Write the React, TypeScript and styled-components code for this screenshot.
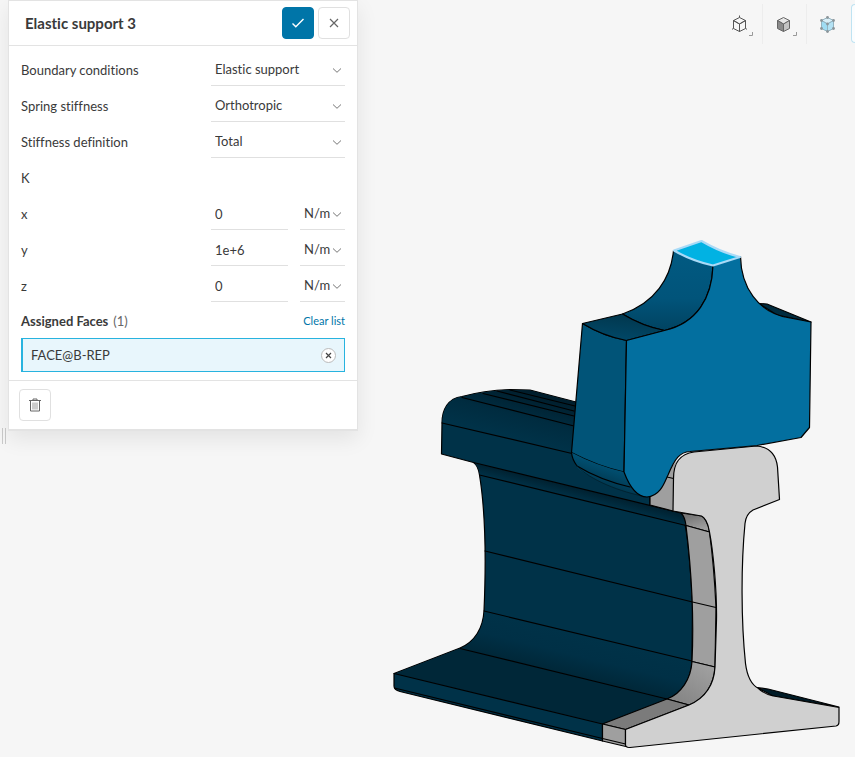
import React, { useState } from "react";
import styled, { createGlobalStyle, css } from "styled-components";

const GlobalStyle = createGlobalStyle`
  *, *::before, *::after { box-sizing: border-box; }
  body {
    margin: 0;
    background: #f6f6f6;
    color: #3a3a3a;
    font-family: Lato, "Liberation Sans", sans-serif;
    font-size: 13px;
    line-height: 20px;
    font-variant-ligatures: none;
  }
  button, input, select { font: inherit; color: inherit; }
`;

const Page = styled.div`
  display: flex;
  align-items: stretch;
  min-height: 100vh;
  overflow: hidden;
`;

const Gutter = styled.div`
  flex: 0 0 8px;
  padding: 428px 2px 0;
`;

const ResizeHandle = styled.div`
  width: 4px;
  height: 16px;
  border: solid #cacaca;
  border-width: 0 1px;
`;

const Panel = styled.form`
  flex: 0 0 350px;
  align-self: flex-start;
  background: #fff;
  border: 1px solid #e3e3e3;
  border-bottom-width: 2px;
  box-shadow: 0 8px 20px rgba(0, 0, 0, 0.08);
`;

const PanelHeader = styled.header`
  display: flex;
  align-items: center;
  gap: 4px;
  height: 45px;
  padding: 0 7px 0 16px;
  border-bottom: 1px solid #e3e3e3;
`;

const Title = styled.h1`
  flex: 1;
  margin: 0;
  font-size: 15px;
  font-weight: 700;
`;

const IconButton = styled.button<{ $primary?: boolean }>`
  display: grid;
  place-items: center;
  width: 32px;
  height: 32px;
  padding: 0;
  border: 1px solid #e0e0e0;
  border-radius: 4px;
  background: #fff;
  color: #666;
  ${(p) =>
    p.$primary &&
    css`
      border-color: #0075a8;
      background: #0075a8;
      color: #fff;
    `}
`;

const Fields = styled.div`
  padding: 4px 12px 8px;
`;

const Row = styled.div`
  display: flex;
  align-items: stretch;
  height: 36px;
`;

const Label = styled.label`
  flex: 1;
  padding-top: 10px;
`;

const Controls = styled.div`
  display: flex;
  justify-content: space-between;
  flex: 0 0 134px;
`;

const SelectBox = styled.div<{ $compact?: boolean }>`
  display: grid;
  grid-template-columns: 1fr 14px;
  align-items: center;
  width: ${(p) => (p.$compact ? "45px" : "100%")};
  border-bottom: 1px solid #e0e0e0;

  select {
    grid-area: 1 / 1 / 2 / 3;
    width: 100%;
    height: 35px;
    padding: 2px 0 0 4px;
    border: 0;
    background: transparent;
    appearance: none;
  }

  svg {
    grid-area: 1 / 2;
    margin-top: 4px;
    pointer-events: none;
    color: #777;
  }
`;

const NumberInput = styled.input`
  width: 77px;
  padding: 4px 4px 0;
  border: 0;
  border-bottom: 1px solid #e0e0e0;
  background: transparent;
`;

const ListHeader = styled.div`
  display: flex;
  align-items: center;
  gap: 5px;
  height: 36px;
  padding-top: 2px;
`;

const ListTitle = styled.h2`
  margin: 0;
  font-size: 13px;
  font-weight: 700;
`;

const Count = styled.span`
  flex: 1;
  color: #666;
`;

const ClearLink = styled.a`
  color: #0075a8;
  font-size: 11px;
  text-decoration: none;
`;

const FaceList = styled.ul`
  margin: 0;
  padding: 0;
  list-style: none;
`;

const FaceItem = styled.li`
  display: flex;
  align-items: center;
  justify-content: space-between;
  height: 34px;
  padding: 0 8px;
  border: 1px solid #27b3df;
  border-left-width: 2px;
  background: #e8f6fc;
`;

const RemoveButton = styled.button`
  display: grid;
  place-items: center;
  width: 15px;
  height: 15px;
  padding: 0;
  border: 1px solid #bbb;
  border-radius: 50%;
  background: #fff;
  color: #444;
`;

const PanelFooter = styled.footer`
  padding: 8px 10px;
  border-top: 1px solid #e3e3e3;
`;

const Viewport = styled.main`
  display: flex;
  flex: 1;
  flex-direction: column;
  min-width: 0;
`;

const Toolbar = styled.div`
  display: flex;
  justify-content: flex-end;
  padding-top: 4px;
`;

const Tool = styled.button`
  display: flex;
  align-items: center;
  width: 44px;
  height: 40px;
  padding: 0 0 0 8px;
  border: 0;
  border-right: 1px solid #ededed;
  background: transparent;

  &:nth-child(3) { border-right: 0; }
`;

const ClippedTool = styled.button`
  width: 4px;
  height: 39px;
  padding: 0;
  border: 1px solid #bfe3f2;
  border-right: 0;
  border-radius: 4px 0 0 4px;
  background: #fbfdfe;
`;

const Model = styled.svg`
  align-self: flex-end;
  width: 454px;
  max-width: 100%;
  height: auto;
  margin: auto 11px 5px 0;
`;

const Chevron = () => (
  <svg width="12" height="12" viewBox="0 0 12 12" fill="none" stroke="currentColor" aria-hidden="true">
    <path d="M2 4.500 6 8.300l4-3.800" />
  </svg>
);

type SelectProps = { id?: string; label?: string; options: string[]; compact?: boolean };

function Select({ id, label, options, compact }: SelectProps) {
  return (
    <SelectBox $compact={compact}>
      <select id={id} aria-label={label}>
        {options.map((o) => (
          <option key={o}>{o}</option>
        ))}
      </select>
      <Chevron />
    </SelectBox>
  );
}

const choices = [
  { id: "boundary", label: "Boundary conditions", options: ["Elastic support", "Fixed support"] },
  { id: "spring", label: "Spring stiffness", options: ["Orthotropic", "Isotropic"] },
  { id: "definition", label: "Stiffness definition", options: ["Total", "Distributed"] },
];

const stiffness = [
  { axis: "x", value: "0" },
  { axis: "y", value: "1e+6" },
  { axis: "z", value: "0" },
];

type CubeKind = "wire" | "solid" | "glass";
const cubeFaces = {
  wire: ["none", "none", "none"],
  solid: ["#e6e6e6", "#8b8b8b", "#c3c3c3"],
  glass: ["#d9eff8", "#9fdcf3", "#b4e2f4"],
};
const cubeStroke = { wire: "#555", solid: "#666", glass: "#93b3c0" };
const cubeCorners = [[12.5, 7.5], [6.5, 10.5], [18.5, 10.5], [12.5, 14], [6.5, 18.5], [18.5, 18.5], [12.5, 21.5]];

function Cube({ kind }: { kind: CubeKind }) {
  const [top, left, right] = cubeFaces[kind];
  return (
    <svg width="32" height="28" viewBox="0 0 32 28" fill="none" stroke={cubeStroke[kind]} strokeLinejoin="round" aria-hidden="true">
      <path fill={top} d="m12.500 7.500 6 3-6 3.500-6-3.500z" />
      <path fill={left} d="m6.500 10.500 6 3.500v7.500l-6-3z" />
      <path fill={right} d="m18.500 10.500-6 3.500v7.500l6-3z" />
      {kind === "wire" && <path d="M12.500 5.500v2M5 19.300l1.500-.800M20 19.300l-1.500-.800" />}
      {kind === "glass" && (
        <g fill="#8b9599" stroke="none">
          {cubeCorners.map(([x, y]) => (
            <circle key={`${x}-${y}`} cx={x} cy={y} r="1.400" />
          ))}
        </g>
      )}
      {kind !== "glass" && <path stroke="#999" d="M25.500 22v3.500H22" />}
    </svg>
  );
}

function WheelOnRail() {
  return (
    <Model viewBox="390 236 454 516" role="img" aria-label="Wheel section resting on a rail">
      <defs>
        <linearGradient id="fillet" x1="0" y1="0" x2="0" y2="1">
          <stop offset="0" stopColor="#015a82" />
          <stop offset="0.6" stopColor="#01547a" />
          <stop offset="1" stopColor="#014361" />
        </linearGradient>
        <linearGradient id="shoulder" x1="0" y1="1" x2="0.3" y2="0">
          <stop offset="0" stopColor="#014a6b" />
          <stop offset="1" stopColor="#01384f" />
        </linearGradient>
        <linearGradient id="flange" gradientUnits="userSpaceOnUse" x1="606" y1="462" x2="598" y2="486">
          <stop offset="0" stopColor="#015478" />
          <stop offset="1" stopColor="#01344a" />
        </linearGradient>
        <linearGradient id="head" gradientUnits="userSpaceOnUse" x1="520" y1="388" x2="508" y2="436">
          <stop offset="0" stopColor="#001d2b" />
          <stop offset="0.55" stopColor="#002c40" />
          <stop offset="1" stopColor="#003248" />
        </linearGradient>
        <linearGradient id="underHead" gradientUnits="userSpaceOnUse" x1="580" y1="488" x2="577" y2="500">
          <stop offset="0" stopColor="#00202f" />
          <stop offset="1" stopColor="#003248" />
        </linearGradient>
        <linearGradient id="footFillet" gradientUnits="userSpaceOnUse" x1="590" y1="637" x2="580" y2="678">
          <stop offset="0" stopColor="#003248" />
          <stop offset="0.5" stopColor="#003046" />
          <stop offset="1" stopColor="#002738" />
        </linearGradient>
        <linearGradient id="webFillet" gradientUnits="userSpaceOnUse" x1="705" y1="665" x2="680" y2="703">
          <stop offset="0" stopColor="#9f9f9f" />
          <stop offset="1" stopColor="#858585" />
        </linearGradient>
        <linearGradient id="neck" gradientUnits="userSpaceOnUse" x1="694" y1="515" x2="698" y2="530">
          <stop offset="0" stopColor="#777" />
          <stop offset="1" stopColor="#9f9f9f" />
        </linearGradient>
      </defs>

      <g stroke="#000" strokeWidth="1.200" strokeLinejoin="round" strokeLinecap="round">
        <path fill="#003248" d="M442 423C442 410 448 398 462 396.500 478 392 498 390 510 389.500L530 390 576 402 650 465V505L681 513C687 518 690 560 692.500 603L692 660C691 680 681 694 667 699L602.500 724V741L400 691.500Q394 690 394 686V673.500L460 648C475 642 483 628 484 611 486 565 486 515 479.500 475Q478 465 473.500 462.500L441.500 454Z" />
        <path stroke="none" fill="url(#head)" d="M442.500 422.500C442.500 410 448 398 462 397 478 392.500 498 390.500 510 390L530 390.500 576 402.500 572 453Z" />
        <path stroke="none" fill="url(#underHead)" d="M474 463 681 513Q685 517 686 525L480 475.500Q479 467 474 463Z" />
        <path stroke="none" fill="url(#footFillet)" d="M484.500 611.500 691 661C690 681 680 694 667 698.500L461 648.500C475 642 484 628 484.500 611.500Z" />
        <path stroke="none" fill="#002738" d="M460 648.500 667 699 602.500 723.500 395 673.500Z" />
        <path fill="none" d="M442 423 572 453.500M462 397.500 574 426M483 393.500 574 416M497 391 574 411M510 390 575 406M473.500 462.500 681 513M479.500 475 686 525.500M485 551 692.500 602M484 611 692 661M460 648.500 667 699M394 673.500 602.500 724M394.500 688 602.500 738.500" />

        <path stroke="none" fill="#9f9f9f" d="M650 494C670 470 676 454 700 450L690 460 674 480 673 511 650 505Z" />
        <path fill="none" d="M650 496V505L673 511M667 477 673.500 478.500" />
        <path fill="url(#neck)" d="M681 513 702 516Q708 520 709.500 532L686 525.500Q685 517 681 513Z" />
        <path fill="#9f9f9f" d="M686 525.500 709.500 532Q714 565 716 607.500L715 667 692 661.500C694 620 692 575 686 525.500Z" />
        <path fill="none" d="M692.500 602 716 607.500" />
        <path fill="url(#webFillet)" d="M692 661.500 715 667C714 685 704 700 689 705L667 699C681 694 691 679 692 661.500Z" />
        <path fill="#7b7b7b" d="M667 699 689 705 625.500 729.500 602.500 724Z" />
        <path fill="#9f9f9f" d="M602.500 724 625.500 729.500V745L630 747.500 602.500 741Z" />
        <path fill="none" d="M602.500 738.500 625.500 744" />
        <path fill="#001b27" d="M757 687.500 768 689 839 707 773 696Z" />
        <path fill="#d0d0d0" d="M673.500 478.500C673.500 462 680 454 694 452L756.500 446C768 447 776 454 777.500 467L779.500 499.500 753 510Q746 514 745 523.500C741 565 741 620 745.500 663.500Q748 683 758.500 688.500C764 694 769 695 773.500 696L839 707.500V721.500Q839 725.500 836 726L630 747.500Q626 747.500 625.500 745V729.500L689 705C705 698 714 685 715 667L716.500 620C717 590 713 550 709.500 532 708 522 704 517 701.500 516L673 511Z" />

        <path fill="#002b3e" d="M759 303.500 767 304 811 322 777 315Z" />
        <path fill="#015478" d="M582.500 323.500Q603 336 626.500 340.500L624 472Q597 466 571.500 452.500Z" />
        <path stroke="none" fill="url(#flange)" d="M571.500 452.500Q597 466 624 472C630 488 638 496 647 497 620 492 596 481 581 471 575 466 572 459 571.500 452.500Z" />
        <path fill="none" d="M571.500 452.500C572 458 574 462 577 466Q600 480 630 487" />
        <path fill="none" stroke="#001b27" strokeWidth="0.700" d="M577 466C590 480 620 492 647 497" />
        <path fill="url(#fillet)" d="M673.500 250.500Q695 261 713 265.500C712 298 697 323 664.500 330.500Q642 326 622.500 314C655 303 671 278 673.500 250.500Z" />
        <path fill="url(#shoulder)" d="M622.500 314Q642 326 664.500 330.500L626.500 340.500Q603 336 582.500 323.500Z" />
        <path fill="#036f9f" d="M713 265.500C712 298 697 323 664.500 330.500L626.500 340.500 624 472C630 488 638 497 647 497 661 496 665 481 668 475 675 458 680 452 690 451.500L757 445.500 801 437.500 809.500 427.500 811 322 790 318C757 313 741 286 740.500 256.500Z" />
      </g>
      <path fill="#01b2e3" stroke="#a9daf7" strokeWidth="2.200" strokeLinejoin="round" d="M674 250.500 701.500 241Q720 252 740 257L713 265.500Q692 261 674 250.500Z" />
    </Model>
  );
}

export default function App() {
  const [values, setValues] = useState(stiffness);
  const update = (axis: string, value: string) =>
    setValues((rows) => rows.map((r) => (r.axis === axis ? { ...r, value } : r)));

  return (
    <>
      <GlobalStyle />
      <Page>
        <Gutter>
          <ResizeHandle />
        </Gutter>
        <Panel onSubmit={(e) => e.preventDefault()}>
          <PanelHeader>
            <Title>Elastic support 3</Title>
            <IconButton $primary type="submit" aria-label="Apply">
              <svg width="14" height="14" viewBox="0 0 14 14" fill="none" stroke="currentColor" strokeWidth="1.400">
                <path d="m1.500 7.500 3.300 3.300L12.500 3" />
              </svg>
            </IconButton>
            <IconButton type="button" aria-label="Cancel">
              <svg width="10" height="10" viewBox="0 0 10 10" stroke="currentColor" strokeWidth="1.200">
                <path d="m1 1 8 8M9 1 1 9" />
              </svg>
            </IconButton>
          </PanelHeader>
          <Fields>
            {choices.map((c) => (
              <Row key={c.id}>
                <Label htmlFor={c.id}>{c.label}</Label>
                <Controls>
                  <Select id={c.id} options={c.options} />
                </Controls>
              </Row>
            ))}
            <Row>
              <Label as="span">K</Label>
            </Row>
            {values.map(({ axis, value }) => (
              <Row key={axis}>
                <Label htmlFor={`k-${axis}`}>{axis}</Label>
                <Controls>
                  <NumberInput id={`k-${axis}`} value={value} onChange={(e) => update(axis, e.target.value)} />
                  <Select compact label={`Unit for ${axis}`} options={["N/m"]} />
                </Controls>
              </Row>
            ))}
            <ListHeader>
              <ListTitle>Assigned Faces</ListTitle>
              <Count>(1)</Count>
              <ClearLink href="#clear">Clear list</ClearLink>
            </ListHeader>
            <FaceList>
              <FaceItem>
                FACE@B-REP
                <RemoveButton type="button" aria-label="Remove face">
                  <svg width="7" height="7" viewBox="0 0 7 7" stroke="currentColor" strokeWidth="1.200">
                    <path d="m1 1 5 5M6 1 1 6" />
                  </svg>
                </RemoveButton>
              </FaceItem>
            </FaceList>
          </Fields>
          <PanelFooter>
            <IconButton type="button" aria-label="Delete">
              <svg width="12" height="14" viewBox="0 0 12 14" fill="none" stroke="currentColor">
                <path d="M0 2.500h12M4 2.500v-1.500h4v1.500M1.500 2.500v10.500h9V2.500" />
                <path stroke="#999" d="M4 4.500v7M6 4.500v7M8 4.500v7" />
              </svg>
            </IconButton>
          </PanelFooter>
        </Panel>
        <Viewport>
          <Toolbar>
            <Tool type="button" aria-label="Wireframe view"><Cube kind="wire" /></Tool>
            <Tool type="button" aria-label="Solid view"><Cube kind="solid" /></Tool>
            <Tool type="button" aria-label="Translucent view"><Cube kind="glass" /></Tool>
            <ClippedTool type="button" aria-label="Selection mode" />
          </Toolbar>
          <WheelOnRail />
        </Viewport>
      </Page>
    </>
  );
}
